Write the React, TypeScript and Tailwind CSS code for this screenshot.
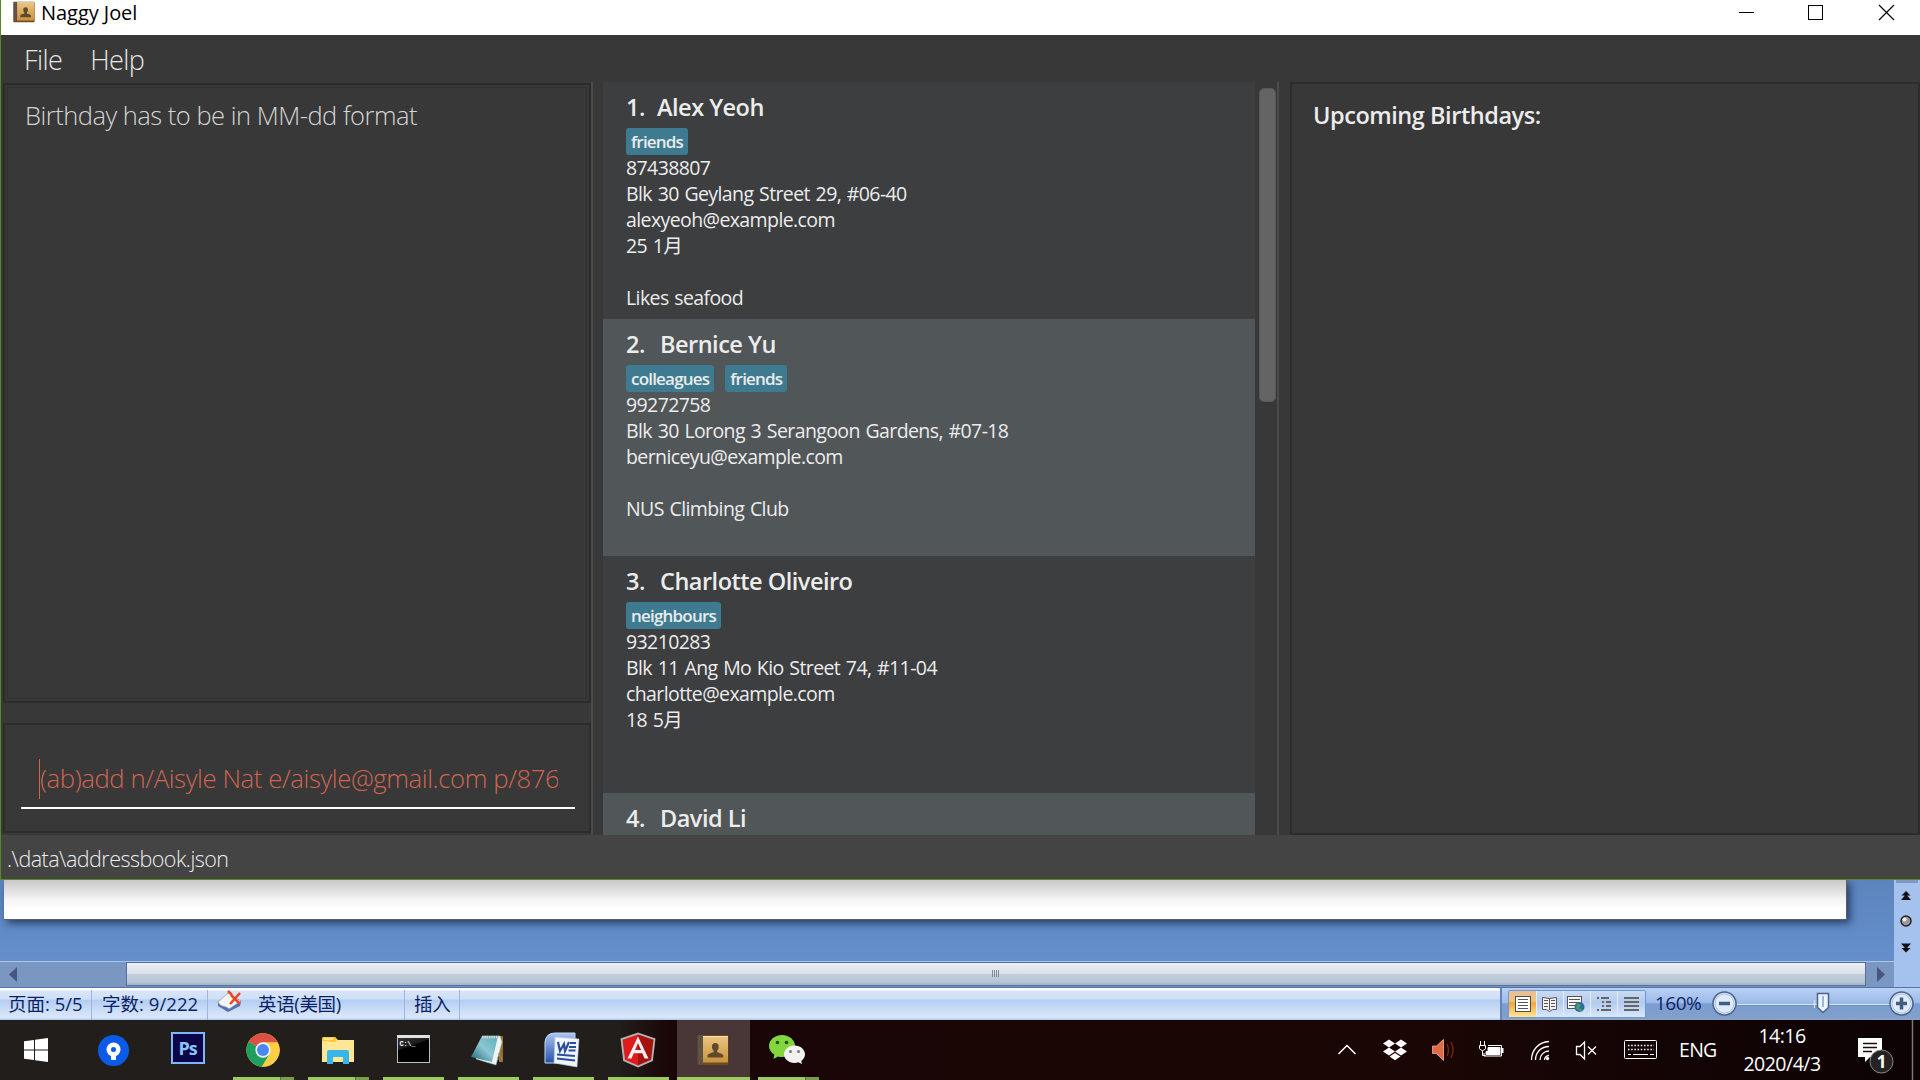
import React from "react";

type Person = { n: number; name: string; tags: string[]; lines: string[] };

const people: Person[] = [
  { n: 1, name: "Alex Yeoh", tags: ["friends"], lines: ["87438807", "Blk 30 Geylang Street 29, #06-40", "alexyeoh@example.com", "25 1月", "", "Likes seafood"] },
  { n: 2, name: "Bernice Yu", tags: ["colleagues", "friends"], lines: ["99272758", "Blk 30 Lorong 3 Serangoon Gardens, #07-18", "berniceyu@example.com", "", "NUS Climbing Club"] },
  { n: 3, name: "Charlotte Oliveiro", tags: ["neighbours"], lines: ["93210283", "Blk 11 Ang Mo Kio Street 74, #11-04", "charlotte@example.com", "18 5月"] },
  { n: 4, name: "David Li", tags: [], lines: [] },
];

function BookIcon({ size }: { size: number }) {
  return (
    <svg width={size} height={size} viewBox="0 0 32 32">
      <defs>
        <linearGradient id="book" x1="0" y1="0" x2="0" y2="1">
          <stop offset="0" stopColor="#ecc583" />
          <stop offset="1" stopColor="#c8923c" />
        </linearGradient>
      </defs>
      <rect x="0.5" y="1" width="31" height="30" rx="1.5" fill="#6b4d22" />
      <rect x="1" y="1.5" width="5" height="28" fill="#5f5347" />
      <rect x="6" y="2" width="25" height="26.5" fill="url(#book)" />
      <rect x="6" y="2" width="25" height="1" fill="#f8dfab" />
      <path d="M18.3 9c2.3 0 3.4 1.7 3.4 3.8 0 1.7-.7 3-1.5 3.8v1.6c2.4.8 5.2 1.300 6 3.100v2.200H10.500v-2.200c.8-1.800 3.600-2.300 6-3.100v-1.600c-.9-.8-1.600-2.100-1.600-3.800 0-2.100 1.100-3.800 3.400-3.800z" fill="#5f4b2b" />
    </svg>
  );
}

function TitleBar() {
  return (
    <div className="flex h-[35px] shrink-0 items-start bg-white pl-[12px]">
      <div className="pt-px"><BookIcon size={22} /></div>
      <div className="ml-[6px] text-[20px] leading-[25px] tracking-[-0.05px] text-black">Naggy Joel</div>
      <svg className="ml-auto" width="200" height="30" viewBox="1720 0 200 30" fill="none" stroke="#000" strokeWidth="1" shapeRendering="crispEdges">
        <path d="M1739 12.500h15M1808.500 5.500h14v14h-14z" />
        <path d="M1879 5l15 15M1894 5l-15 15" shapeRendering="auto" strokeWidth="1.200" />
      </svg>
    </div>
  );
}

function Card({ p }: { p: Person }) {
  return (
    <div className={`h-[237px] shrink-0 pl-[23px] pt-[9px] text-[#ececec] ${p.n % 2 ? "bg-[#3c3e3f]" : "bg-[#515658]"}`}>
      <div className="flex h-[34px] items-center text-[23.500px] font-semibold tracking-[-0.500px]">
        <span className={p.n === 1 ? "w-[31px]" : "w-[34px]"}>{p.n}.</span>
        <span>{p.name}</span>
      </div>
      <div className="mt-[3px] flex h-[27px] gap-[11px]">
        {p.tags.map((t) => (
          <span key={t} className="rounded-[3px] bg-[#3e7b91] px-[5px] text-[17px] font-semibold leading-[28px] tracking-[-0.800px]">{t}</span>
        ))}
      </div>
      <div className="text-[19.500px] leading-[26px] tracking-[-0.600px] [word-spacing:1.200px]">
        {p.lines.map((l, i) => <div key={i} className="h-[26px] whitespace-pre">{l}</div>)}
      </div>
    </div>
  );
}

function AddressBook() {
  return (
    <div className="flex h-[880px] flex-col border-b border-l border-[#568a1e] bg-[#383838]">
      <TitleBar />
      <div className="flex h-[47px] shrink-0 items-center gap-[28px] pl-[23px] pt-[4px] text-[27px] font-light tracking-[-0.600px] text-[#e6e6e6]">
        <span>File</span>
        <span>Help</span>
      </div>
      <div className="flex h-[753px] shrink-0">
        <div className="flex w-[590px] shrink-0 flex-col pl-[2px] pt-px">
          <div className="h-[620px] border-2 border-[#2b2b2b] p-[2px]">
            <div className="h-full border border-[#303030] pl-[17px] pt-[10px] text-[25.500px] font-[350] leading-[34px] tracking-[-0.500px] text-[#d4d4d4]">Birthday has to be in MM-dd format</div>
          </div>
          <div className="mt-[20px] h-[110px] border-2 border-[#2c2c2c] pl-[16px] pr-[14px] pt-[33px]">
            <div className="flex h-[51px] border-b-2 border-white pl-[18px]">
              <div className="mt-px h-[40px] w-px bg-[#d06651]" />
              <div className="w-[518px] overflow-hidden whitespace-nowrap text-[25.700px] font-light leading-[42px] tracking-[-0.400px] text-[#d06651]">(ab)add n/Aisyle Nat e/aisyle@gmail.com p/876</div>
            </div>
          </div>
        </div>
        <div className="h-full w-[2px] shrink-0 bg-[#4b4b4b]" />
        <div className="ml-[10px] flex h-[753px] w-[652px] shrink-0 flex-col overflow-hidden">
          {people.map((p) => <Card key={p.n} p={p} />)}
        </div>
        <div className="flex w-[22px] shrink-0 pl-[4px] pt-[6px]">
          <div className="h-[314px] w-[17px] rounded-[5px] border border-[#575757] bg-[#646464]" />
        </div>
        <div className="h-full w-[2px] shrink-0 bg-[#4b4b4b]" />
        <div className="ml-[11px] flex-1 border-2 border-[#2c2c2c] pl-[21px] pt-[14px] text-[23.500px] font-semibold leading-[34px] tracking-[-0.450px] text-[#ececec]">Upcoming Birthdays:</div>
      </div>
      <div className="flex h-[44px] items-center bg-[#444444] pl-[6px] pt-[4px] text-[21.500px] font-light tracking-[-0.520px] text-[#eeeeee]">.\data\addressbook.json</div>
    </div>
  );
}

function ViewButtons() {
  return (
    <div className="flex h-[28px] w-[138px] overflow-hidden rounded-[2px] border border-[#6f96d2] bg-[#c8daf4]">
      <svg width="136" height="26" viewBox="1509 991 136 26" fill="none">
        <defs>
          <linearGradient id="vb" x1="0" y1="0" x2="0" y2="1"><stop offset="0" stopColor="#c9dbf3" /><stop offset=".45" stopColor="#b4cbef" /><stop offset="1" stopColor="#d9e7fb" /></linearGradient>
          <linearGradient id="vo" x1="0" y1="0" x2="0" y2="1"><stop offset="0" stopColor="#e6c096" /><stop offset=".4" stopColor="#f3c179" /><stop offset=".45" stopColor="#efa63a" /><stop offset="1" stopColor="#ffe795" /></linearGradient>
        </defs>
        <rect x="1509" y="991" width="136" height="26" fill="url(#vb)" />
        <rect x="1509" y="991" width="27" height="26" fill="url(#vo)" />
        <path d="M1536.500 991v26M1563.500 991v26M1590.500 991v26M1617.500 991v26" stroke="#e3edfb" />
        <rect x="1515.500" y="996.500" width="15" height="15" fill="#fff" stroke="#4d4d4d" />
        <path d="M1518 999.500h10M1518 1002.500h10M1518 1005.500h10M1518 1008.500h10" stroke="#555" />
        <path d="M1542.500 997.500l7 1 7-1v12l-4 0-3 2-3-2h-4z" fill="#f4f4f4" stroke="#555" />
        <path d="M1549.500 998v12M1544 1000.500h4M1544 1003.500h4M1544 1006.500h4M1551 1000.500h4M1551 1003.500h4M1551 1006.500h4" stroke="#555" />
        <rect x="1567.500" y="996.500" width="14" height="12" fill="#f8f8f8" stroke="#555" />
        <path d="M1569 999.500h11M1569 1002.500h11M1569 1005.500h8" stroke="#555" />
        <circle cx="1579.500" cy="1007" r="5" fill="#2e6ba6" /><path d="M1577 1003l4 2-2 3 4 2-2 1.500-5-3z" fill="#48a05a" />
        <path d="M1597 998h2M1601 998h8M1602 1002h2M1606 1002h5M1602 1006h2M1606 1006h5M1597 1010h2M1601 1010h10" stroke="#666" strokeWidth="2" />
        <path d="M1624 998h15M1624 1002h15M1624 1006h15M1624 1010h15" stroke="#666" strokeWidth="2" />
      </svg>
    </div>
  );
}

function ZoomControl() {
  return (
    <svg width="206" height="30" viewBox="1711 989 206 30" fill="none">
      <path d="M1738 1004.500h153" stroke="#dbe7f8" strokeWidth="1.500" />
      <path d="M1738 1005.500h153" stroke="#5f7fae" strokeWidth=".7" />
      {[1725.500, 1902.500].map((x) => (
        <g key={x}>
          <circle cx={x} cy="1003.500" r="11.500" fill="#dfeafa" stroke="#48648f" strokeWidth="1.500" />
          <circle cx={x} cy="1003.500" r="9.500" stroke="#a9c1e3" />
          <path d={`M${x - 5.5} 1003.500h11`} stroke="#405f80" strokeWidth="3.500" />
        </g>
      ))}
      <path d="M1902.500 997.500v12" stroke="#405f80" strokeWidth="3.500" />
      <path d="M1815.500 1000v8M1814 1004h3" stroke="#dbe7f8" />
      <path d="M1818.500 993.500h11v14l-5.500 5-5.500-5z" fill="#edf3fc" stroke="#48648f" strokeWidth="1.500" />
      <path d="M1824 996v11" stroke="#9db5d8" strokeWidth="2" />
    </svg>
  );
}

function WordWindow() {
  return (
    <div className="flex h-[140px] flex-col">
      <div className="flex h-[107px] shrink-0">
        <div className="flex w-[1894px] flex-col">
          <div className="h-[81px] overflow-hidden bg-linear-to-b from-[#5c85bd] to-[#648fcb] pl-[4px]">
            <div className="h-[40px] w-[1843px] border-b border-r border-[#5d5d5d] bg-linear-to-b from-[#c8c8c8] via-[#f4f4f4] via-50% to-white to-75% shadow-[3px_3px_8px_rgba(20,40,80,0.8)]" />
          </div>
          <div className="flex h-[26px] border-t border-[#a9c6ee] bg-[#7997c1]">
            <div className="flex w-[126px] items-center pl-[9px]"><svg width="8" height="15"><path d="M8 0v15L0 7.500z" fill="#46567f" /></svg></div>
            <div className="flex h-[24px] w-[1740px] items-center justify-center border border-[#566f96] bg-[linear-gradient(#edf0f5,#d9dfe8_48%,#c3cedc_52%,#b8c6d8_85%,#a5b3c8)]">
              <svg width="12" height="8"><path d="M2.500 0v7M4.500 0v7M6.500 0v7M8.500 0v7" stroke="#858b96" /></svg>
            </div>
            <div className="flex items-center pl-[11px]"><svg width="8" height="15"><path d="M0 0v15l8-7.500z" fill="#46567f" /></svg></div>
          </div>
        </div>
        <div className="w-[26px] bg-[#a5c2ef]">
          <svg width="26" height="107" viewBox="1894 880 26 107">
            <path d="M1896 880h22v3h-22z" fill="#7f99c2" />
            <path d="M1906 891l4.500 4.500h-3v.5l3.500 4h-10l3.500-4v-.5h-3z" fill="#111" />
            <circle cx="1906" cy="921" r="5" fill="#9a9a9a" stroke="#222" strokeWidth="1.500" /><circle cx="1904.500" cy="919.500" r="2" fill="#eee" />
            <path d="M1906 952.500l-4.500-4.500h3v-.5l-3.500-4h10l-3.500 4v.5h3z" fill="#111" />
          </svg>
        </div>
      </div>
      <div className="flex h-[33px] shrink-0 border-t border-[#5273ab] bg-[linear-gradient(#ffffff_0,#ffffff_2px,#d7e5f8_3px,#d0e0f6_11px,#b3cdf3_12px,#d0e0f6_24px,#d9e7fa_30px,#b3cdf3_31px)] pt-[2px] text-[18.500px] leading-[27px] text-[#0d1f66]">
        <div className="h-[30px] w-[92px] whitespace-nowrap border-r border-[#9ab6de] pl-[8px]">页面: 5/5</div>
        <div className="h-[30px] w-[116px] whitespace-nowrap border-r border-[#9ab6de] pl-[10px] tracking-[0.050px]">字数: 9/222</div>
        <div className="flex h-[30px] w-[197px] gap-[16px] border-r border-[#9ab6de] pl-[9px] tracking-[-0.350px]">
          <svg width="25" height="23" viewBox="0 0 25 23">
            <path d="M1 12l10-8 13 7-1 5-12 6L1 16z" fill="#5570ad" />
            <path d="M1 12l10-9c3 0 4 3 4 3l9 5-12 8c-4-4-8-1-11-7z" fill="#f4f4f6" stroke="#9297a5" strokeWidth=".7" />
            <path d="M14 5l9 9M23 3L13 14M11 1l4 4" stroke="#ee4522" strokeWidth="2.500" />
          </svg>
          <span>英语(美国)</span>
        </div>
        <div className="h-[30px] w-[55px] border-r border-[#9ab6de] pl-[9px] tracking-[-0.200px]">插入</div>
        <div className="flex-1" />
        <div className="-mt-[2px] flex h-[32px] w-[420px] items-center border-l-2 border-[#6385bb] bg-[linear-gradient(#b9d1f4,#9dbbe9_45%,#7b9dd2_50%,#7f9fcc_90%,#8ea4c4)] pl-[6px]">
          <ViewButtons />
          <span className="ml-[9px] w-[50px] pb-[2px] text-[19px] tracking-[-0.500px]">160%</span>
          <span className="ml-[5px]"><ZoomControl /></span>
        </div>
      </div>
    </div>
  );
}

function Slot({ w, bar, dark, children, active }: { w: number; bar?: boolean; dark?: boolean; active?: boolean; children: React.ReactNode }) {
  return (
    <div className={`flex shrink-0 flex-col items-center ${active ? "bg-[#493737]" : ""}`} style={{ width: w }}>
      <div className="flex h-[57px] items-center pt-[3px]">{children}</div>
      {bar && (
        <div className={`flex h-[3px] bg-[#9ccb5d] ${active ? "w-[73px]" : "w-[61px]"}`}>
          {dark && <div className="ml-auto w-[14px] border-l border-[#52772f] bg-[#799d49]" />}
        </div>
      )}
    </div>
  );
}

function Taskbar() {
  return (
    <div className="flex h-[60px] bg-[linear-gradient(90deg,#211e1b_0,#211e1b_620px,#1a0606_670px,#1a0605_1400px,#0d0304_1920px)] text-white">
      <Slot w={75}>
        <svg className="-ml-[3px]" width="24" height="24" viewBox="0 0 24 24"><path d="M0 3.300L10 2v9.500H0zM11 1.800L24 0v11.500H11zM0 12.500h10V22L0 20.700zM11 12.500h13V24l-13-1.800z" fill="#fff" /></svg>
      </Slot>
      <Slot w={75}>
        <svg className="ml-px" width="31" height="31" viewBox="0 0 31 31"><circle cx="15.500" cy="15.500" r="15.500" fill="#0b5be8" /><circle cx="15.500" cy="14.500" r="7" fill="#fff" /><path d="M13 18h5v7h-5z" fill="#fff" /><circle cx="15.500" cy="14.500" r="2.500" fill="#0b5be8" /></svg>
      </Slot>
      <Slot w={75}>
        <div className="-mt-[4px] flex h-[32px] w-[34px] items-center justify-center border-2 border-[#7cb8f5] bg-[#0c0548] text-[18px] font-bold leading-none tracking-[-1px] text-[#8ac5ff]">Ps</div>
      </Slot>
      <Slot w={77} bar dark>
        <svg className="-ml-[2px]" width="34" height="34" viewBox="0 0 48 48">
          <circle cx="24" cy="24" r="23.500" fill="#ffce44" />
          <path d="M24 24L3.700 12.200A23.500 23.500 0 0 1 44.400 12.300L44.400 13.500H24z" fill="#dd5144" />
          <path d="M24 24L3.700 12.200A23.500 23.500 0 0 0 22.500 47.500L33.500 29.500z" fill="#1da05f" />
          <path d="M24 13.300h20.900A23.500 23.500 0 0 1 22.500 47.500L33.300 29.400z" fill="#ffce44" />
          <circle cx="24" cy="24" r="10.800" fill="#f1f1f1" /><circle cx="24" cy="24" r="8.500" fill="#4b87ee" />
        </svg>
      </Slot>
      <Slot w={73} bar dark>
        <svg className="-ml-[2px]" width="32" height="28" viewBox="0 0 32 28">
          <path d="M0 3q0-2 2-2h11l3 3h16v22H0z" fill="#ffe694" /><path d="M0 5V3q0-2 2-2h11l2 3-2 2z" fill="#fbc928" /><path d="M2 3h9" stroke="#fff" />
          <path d="M5 28V16q0-2 2-2h18q2 0 2 2v12h-6v-7H11v7z" fill="#38b6ea" />
        </svg>
      </Slot>
      <div className="ml-px flex"><Slot w={75} bar>
        <div className="-ml-px -mt-[3px] h-[28px] w-[33px] border border-[#b9bec6] border-t-[#dfe3ea] border-t-3 bg-[linear-gradient(160deg,#333_0,#1a1a1a_35%,#000_36%)] pl-[2px] pt-[2px] font-['Liberation_Mono'] text-[7px] font-bold leading-[8px] tracking-[-0.300px]">C:\_</div>
      </Slot></div>
      <Slot w={75} bar>
        <svg className="-ml-[2px]" width="34" height="34" viewBox="0 0 34 34">
          <defs><linearGradient id="np" x1="0" y1="1" x2="1" y2="0"><stop offset="0" stopColor="#14606d" /><stop offset=".5" stopColor="#8cc6d2" /><stop offset="1" stopColor="#5aaebb" /></linearGradient></defs>
          <path d="M28 3h4v26l-4 0z" fill="#96702b" />
          <path d="M12 3h17l2 6-6 23-20-6z" fill="#eef3f4" stroke="#9bb" strokeWidth=".5" />
          <path d="M11 3h16l-6 26-21-5z" fill="url(#np)" /><path d="M11 4h17" stroke="#d4d4d4" strokeWidth="2.500" strokeDasharray="1.500 .8" />
          <path d="M27 20l4 6M26 24l4 5" stroke="#999" strokeWidth=".6" />
        </svg>
      </Slot>
      <Slot w={75} bar>
        <svg className="-ml-[3px]" width="36" height="36" viewBox="0 0 36 36">
          <defs><linearGradient id="wd" x1="0" y1="0" x2="0" y2="1"><stop offset="0" stopColor="#a9c6f2" /><stop offset="1" stopColor="#2450a8" /></linearGradient></defs>
          <path d="M1 31V10Q2 1 11 1h20v30z" fill="url(#wd)" stroke="#c8d9f3" />
          <path d="M11 5l24 2-2 28-23-4z" fill="#f2f5fb" stroke="#bac7de" strokeWidth=".6" />
          <path d="M14 10l2 9 4-7 1 7 4-9" fill="none" stroke="#2a4f9e" strokeWidth="2.200" />
          <path d="M26 11h6M25 15h7M24.500 18.500h7M13 22.500l18 1.500M13 26.500l18 2" stroke="#2a4f9e" strokeWidth="2" />
        </svg>
      </Slot>
      <Slot w={75} bar>
        <svg className="-ml-[2px]" width="36" height="36" viewBox="0 0 36 36">
          <path d="M18 .5l17.500 6-2.700 22.500L18 35.500 3.200 29 .5 6.500z" fill="#b3b3b3" />
          <path d="M18 2.500l15.500 5.300L31 27.800l-13 5.700z" fill="#a6120d" /><path d="M18 2.500L2.500 7.800 5 27.800l13 5.700z" fill="#df1b1b" />
          <path fillRule="evenodd" d="M18 4.500l10.500 22h-4l-2.200-5.200h-8.600L11.500 26.500h-4zM18 11l-3 7h6z" fill="#f0f0f0" />
        </svg>
      </Slot>
      <div className="ml-px flex"><Slot w={73} bar active><div className="-ml-[2px]"><BookIcon size={32} /></div></Slot></div>
      <div className="ml-[3px] flex">
        <Slot w={71} bar dark>
          <svg className="-ml-[3px]" width="36" height="30" viewBox="0 0 36 30">
            <path d="M13 0c7.500 0 13 5 13 11s-5 11-13 11c-1.500 0-3-.2-4-.6L4.500 24l.8-4.400C2 17.600 0 14.500 0 11 0 5 5.500 0 13 0z" fill="#83d63c" />
            <circle cx="8.500" cy="7.500" r="1.800" fill="#28501a" /><circle cx="17.500" cy="7.500" r="1.800" fill="#28501a" />
            <path d="M25.500 10.500c6 0 10.500 4 10.500 8.800 0 2.800-1.500 5-3.700 6.600l.6 3.100-3.600-1.700c-1.200.4-2.500.6-3.800.6C19.500 27.900 15 24 15 19.300s4.500-8.800 10.500-8.800z" fill="#f2f2f2" />
            <circle cx="21.500" cy="16.500" r="1.500" fill="#777" /><circle cx="29.500" cy="16.500" r="1.500" fill="#777" />
          </svg>
        </Slot>
      </div>
      <div className="ml-auto flex h-[60px]">
        <svg width="321" height="60" viewBox="1337 1020 321 60" fill="none" stroke="#fff">
          <path d="M1338.500 1054l8.500-8.500 8.500 8.500" strokeWidth="1.500" />
          <g fill="#fff" stroke="none"><path d="M1389 1039.500l6 4-6 4-6-4zM1401 1039.500l6 4-6 4-6-4zM1389 1047.500l6 4-6 4-6-4zM1401 1047.500l6 4-6 4-6-4zM1395 1053l5.500 3.500-5.500 3.700-5.500-3.700z" /></g>
          <path d="M1432.500 1046h4l7-6.500v21l-7-7h-4z" fill="#e06a45" stroke="#f3b09a" strokeWidth=".8" />
          <path d="M1447 1044q3 6 0 12M1451 1042q4 8 0 16" stroke="#6b2412" strokeWidth="1.500" />
          <path d="M1488 1045.500h13.500v10.500H1484v-3" /><path d="M1488 1047.500h12v7h-14v-3h2z" fill="#fff" /><path d="M1502.500 1048v5" strokeWidth="2" />
          <path d="M1480.500 1041v4M1484.500 1041v4M1482.500 1051v4.500h3" /><path d="M1479.500 1045.500h6v3q-1 2-3 2t-3-2z" />
          <path d="M1531.500 1060c0-10 7-18 17.500-18.500M1535.500 1060c0-8 6-13.500 13.500-13.500M1540 1060c0-5 4-9 9-9M1544.500 1060c0-2.500 2-4.500 4.500-4.500" strokeWidth="1.300" /><circle cx="1547.500" cy="1058.500" r="1.700" fill="#fff" stroke="none" />
          <path d="M1576.500 1046.500h3.500l4.500-4.500v17l-4.500-4.500h-3.500zM1588 1046.500l8 8M1596 1046.500l-8 8" strokeWidth="1.300" />
          <rect x="1624.500" y="1040.500" width="32" height="18" rx="1" />
          <path d="M1628 1045.500h26M1628 1049.500h26" strokeDasharray="1.500 1.700" strokeWidth="1.500" /><path d="M1628 1054.500h3M1633 1054.500h15M1650 1054.500h4" />
        </svg>
        <div className="ml-[21px] flex w-[40px] items-center whitespace-nowrap text-[19.500px] tracking-[-0.700px]">ENG</div>
        <div className="ml-[20px] w-[86px] pt-[2px] text-center text-[19.500px] leading-[28px] tracking-[-0.500px]">
          <div>14:16</div><div>2020/4/3</div>
        </div>
        <svg className="ml-[33px]" width="62" height="60" viewBox="1858 1020 62 60">
          <path d="M1858 1038h24v19h-12l-5 5v-5h-7z" fill="#fff" /><path d="M1863 1043.500h14M1863 1047.500h14M1863 1051.500h9" stroke="#1a0a0a" strokeWidth="1.300" />
          <circle cx="1881.500" cy="1061.500" r="11.500" fill="#252222" stroke="#888" /><text x="1881.500" y="1067.500" textAnchor="middle" fill="#fff" fontSize="17" fontWeight="700" fontFamily="Open Sans">1</text>
          <path d="M1912.500 1020v60" stroke="#777" strokeWidth="1.500" />
        </svg>
      </div>
    </div>
  );
}

export default function App() {
  return (
    <div className="flex h-[1080px] w-[1920px] flex-col overflow-hidden font-['Open_Sans','Noto_Sans_CJK_SC',sans-serif]">
      <AddressBook />
      <WordWindow />
      <Taskbar />
    </div>
  );
}
